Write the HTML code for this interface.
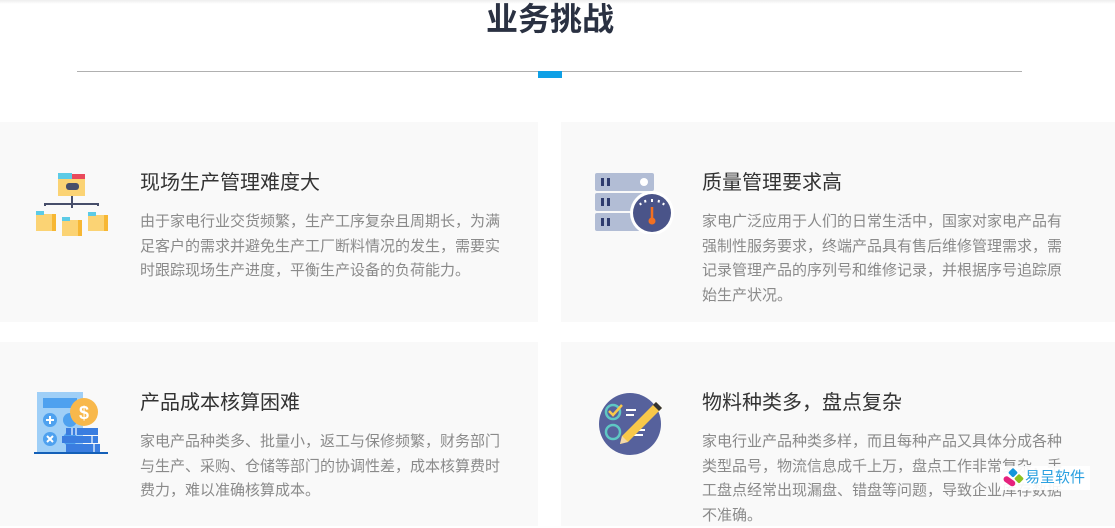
<!DOCTYPE html>
<html><head><meta charset="utf-8"><style>
body{margin:0;width:1115px;height:526px;overflow:hidden;background:#fff;font-family:"Liberation Sans","Noto Sans CJK SC",sans-serif;position:relative}
.topsh{position:absolute;left:0;top:0;width:1115px;height:4px;background:linear-gradient(#eee,#fff)}
h1{position:absolute;left:0;width:1100px;text-align:center;top:-1px;margin:0;font-size:32px;font-weight:bold;color:#2a3142;line-height:40px}
.line{position:absolute;left:77px;top:71px;width:945px;height:1px;background:#b0b0b0}
.blk{position:absolute;left:538px;top:71px;width:24px;height:7px;background:#0ea0e6}
.card{position:absolute;background:#f9f9f9;height:200px}
.t{position:absolute;font-size:20px;color:#333;line-height:26px;white-space:nowrap}
.d{position:absolute;font-size:15px;color:#8a8a8a;line-height:24.5px;width:372px}
.ic{position:absolute}
</style></head><body>
<div class="topsh"></div>
<h1>业务挑战</h1>
<div class="line"></div><div class="blk"></div>
<div class="card" style="left:0;top:122px;width:538px"></div>
<div class="card" style="left:561px;top:122px;width:554px"></div>
<div class="card" style="left:0;top:342px;width:538px;height:184px"></div>
<div class="card" style="left:561px;top:342px;width:554px;height:184px"></div>

<svg class="ic" style="left:32px;top:170px" width="80" height="70" viewBox="0 0 80 70">
<rect x="26" y="4" width="27" height="6" fill="#e94a5c"/><rect x="26" y="3" width="14" height="6" fill="#5ccbe6"/>
<rect x="26" y="9" width="27" height="17" fill="#fbd374"/><rect x="34" y="13" width="13" height="7" rx="3" fill="#474e6a"/>
<path d="M40 26V38M13 36V34H66V36M40 34V38" stroke="#474e6a" stroke-width="2" fill="none"/>
<rect x="4" y="44" width="20" height="17" fill="#fbd374"/><rect x="4" y="41" width="8" height="4" fill="#5ccbe6"/><rect x="20" y="44" width="4" height="17" fill="#f7b733"/>
<rect x="30" y="50" width="20" height="16" fill="#fbd374"/><rect x="30" y="47" width="8" height="4" fill="#5ccbe6"/><rect x="46" y="50" width="4" height="16" fill="#f7b733"/>
<rect x="56" y="45" width="20" height="16" fill="#fbd374"/><rect x="56" y="42" width="8" height="4" fill="#5ccbe6"/><rect x="72" y="45" width="4" height="16" fill="#f7b733"/>
</svg>
<div class="t" style="left:140px;top:170px">现场生产管理难度大</div>
<div class="d" style="left:140px;top:210px">由于家电行业交货频繁，生产工序复杂且周期长，为满足客户的需求并避免生产工厂断料情况的发生，需要实时跟踪现场生产进度，平衡生产设备的负荷能力。</div>

<svg class="ic" style="left:594px;top:172px" width="80" height="62" viewBox="0 0 80 62">
<rect x="1" y="1" width="59" height="18" rx="2" fill="#b2bdd5"/><rect x="1" y="21" width="59" height="18" rx="2" fill="#b2bdd5"/><rect x="1" y="41" width="59" height="18" rx="2" fill="#b2bdd5"/>
<g fill="#2e3b6e"><rect x="7" y="6" width="3" height="8"/><rect x="13" y="6" width="3" height="8"/><rect x="7" y="26" width="3" height="8"/><rect x="13" y="26" width="3" height="8"/><rect x="7" y="46" width="3" height="8"/><rect x="13" y="46" width="3" height="8"/></g>
<circle cx="50" cy="10" r="4" fill="#fff"/>
<circle cx="58" cy="41" r="22" fill="#fff"/><circle cx="58" cy="41" r="19" fill="#4a5489"/>
<path d="M46 31l1 2M51 28l.5 2.5M58 27v3M65 28l-.5 2.5M70 31l-1 2" stroke="#fff" stroke-width="2"/>
<path d="M58 35v13" stroke="#f37021" stroke-width="2.5"/><circle cx="58" cy="49" r="3.5" fill="#f37021"/>
</svg>
<div class="t" style="left:702px;top:170px">质量管理要求高</div>
<div class="d" style="left:702px;top:210px">家电广泛应用于人们的日常生活中，国家对家电产品有强制性服务要求，终端产品具有售后维修管理需求，需记录管理产品的序列号和维修记录，并根据序号追踪原始生产状况。</div>

<svg class="ic" style="left:32px;top:390px" width="80" height="66" viewBox="0 0 80 66">
<rect x="5" y="2" width="46" height="60" fill="#9fcff7"/><rect x="11" y="8" width="34" height="10" fill="#4ea1ef"/>
<circle cx="18" cy="30" r="7" fill="#4ea1ef"/><circle cx="18" cy="49" r="7" fill="#4ea1ef"/><circle cx="38" cy="30" r="7" fill="#4ea1ef"/><circle cx="38" cy="49" r="7" fill="#4ea1ef"/>
<path d="M14 30h8M18 26v8M15 46l6 6M21 46l-6 6" stroke="#fff" stroke-width="2"/>
<g fill="#3a7de0"><rect x="34" y="38" width="32" height="7"/><rect x="30" y="46" width="36" height="7"/><rect x="34" y="54" width="34" height="8"/></g>
<path d="M40 38v7M44 38v7M60 46v7M62 54v8" stroke="#cfe4fb" stroke-width="1.5"/>
<circle cx="52" cy="22" r="14" fill="#f8b84b"/><text x="52" y="29" font-size="18" font-weight="bold" fill="#fff" text-anchor="middle" font-family="Liberation Sans">$</text>
<rect x="2" y="62" width="74" height="2" fill="#1460b8"/>
</svg>
<div class="t" style="left:140px;top:390px">产品成本核算困难</div>
<div class="d" style="left:140px;top:430px">家电产品种类多、批量小，返工与保修频繁，财务部门与生产、采购、仓储等部门的协调性差，成本核算费时费力，难以准确核算成本。</div>

<svg class="ic" style="left:598px;top:392px" width="70" height="64" viewBox="0 0 70 64">
<circle cx="32" cy="32" r="31" fill="#56619c"/>
<circle cx="15" cy="20" r="7" fill="none" stroke="#5ec7c4" stroke-width="2.5"/><path d="M11 19l4 4 9-10" stroke="#f8c84a" stroke-width="2.5" fill="none"/>
<circle cx="15" cy="40" r="7" fill="none" stroke="#5ec7c4" stroke-width="2.5"/>
<path d="M28 18h10M28 23h8M33 38h14M33 43h12" stroke="#fff" stroke-width="2"/>
<path d="M58 10L64 16L30 50L22 52L24 44Z" fill="#f8c84a"/><path d="M58 10L64 16L61 19L55 13Z" fill="#333"/><path d="M22 52l2-8 6 6z" fill="#f3d9a9"/>
</svg>
<div class="t" style="left:702px;top:390px">物料种类多，盘点复杂</div>
<div class="d" style="left:702px;top:430px">家电行业产品种类多样，而且每种产品又具体分成各种类型品号，物流信息成千上万，盘点工作非常复杂，手工盘点经常出现漏盘、错盘等问题，导致企业库存数据不准确。</div>

<div style="position:absolute;left:1000px;top:466px;width:90px;height:24px;background:rgba(255,255,255,.92)">
<svg style="position:absolute;left:2px;top:2px" width="24" height="20" viewBox="0 0 24 20"><rect x="1" y="10" width="13" height="6" rx="3" transform="rotate(35 7 13)" fill="#e6237e"/><rect x="8" y="1" width="7" height="7" rx="1.5" transform="rotate(45 11 4)" fill="#1296db"/><rect x="14" y="7" width="7" height="7" rx="1.5" transform="rotate(45 17 10)" fill="#8dc21f"/></svg>
<span style="position:absolute;left:25px;top:2px;font-size:15px;color:#2aa0e0;line-height:20px;white-space:nowrap">易呈软件</span></div>
</body></html>
